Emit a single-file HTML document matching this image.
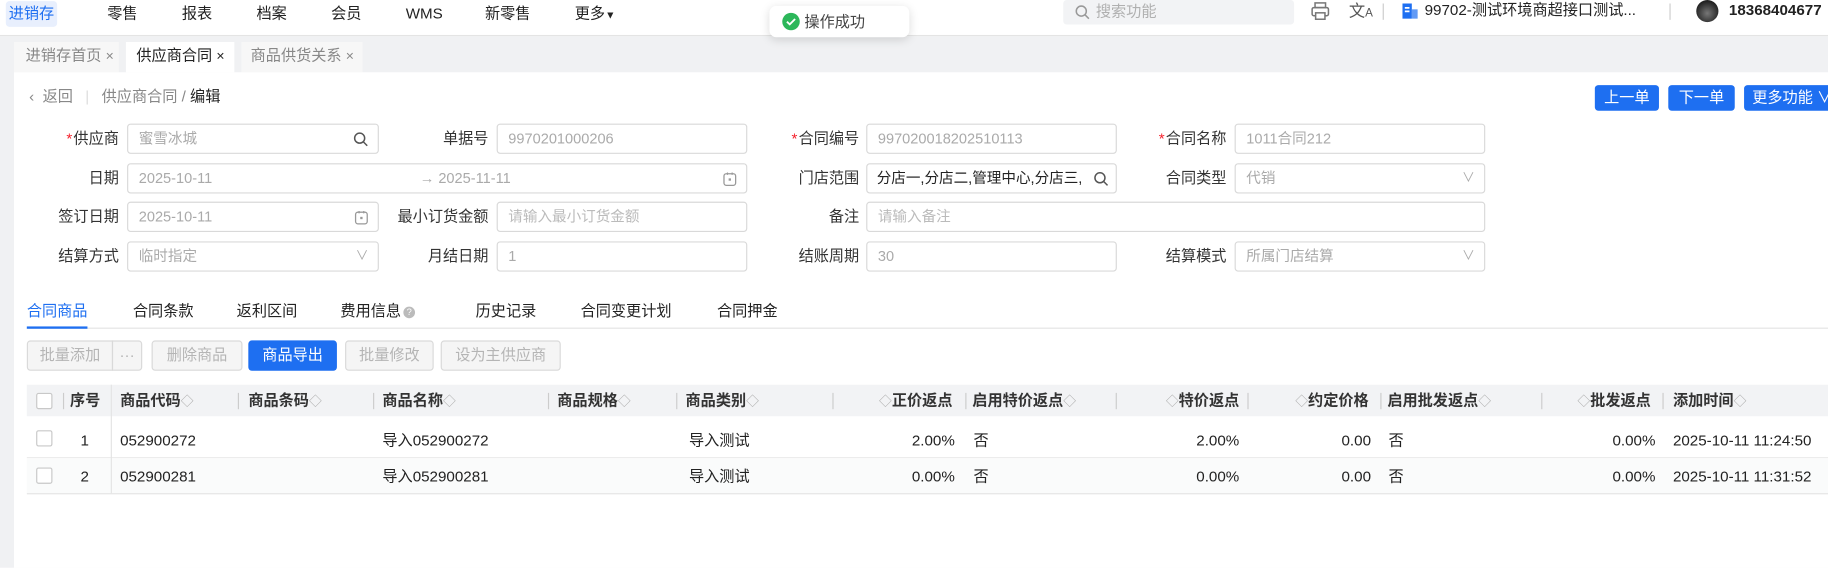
<!DOCTYPE html>
<html><head><meta charset="utf-8">
<style>
*{box-sizing:border-box;margin:0;padding:0}
html,body{width:1828px;height:567px;overflow:hidden;background:#fff}
#w{position:absolute;left:0;top:0;width:1568px;height:487px;transform:scale(1.16582);transform-origin:0 0;font-family:"Liberation Sans","Noto Sans CJK SC",sans-serif;font-size:13px;color:#222;background:#f0f1f3}
.a{position:absolute;white-space:nowrap}
.inp{position:absolute;height:26px;border:1px solid #d9d9d9;border-radius:3px;background:#fff;color:#aaa;font-size:12.5px;line-height:24px;padding-left:9px;overflow:hidden;white-space:nowrap}
.lbl{position:absolute;width:100px;text-align:right;font-size:13px;line-height:26px;color:#333}
.req::before{content:"*";color:#f5222d;margin-right:1px}
.ico{position:absolute;right:8px;top:6px}
.btn{position:absolute;height:26px;border:1px solid #d9d9d9;border-radius:3px;background:#f5f5f5;color:#b5b5b5;font-size:13px;line-height:24px;text-align:center}
.bb{position:absolute;height:22px;border-radius:3px;background:#1e6ff1;color:#fff;font-size:13px;line-height:22px;text-align:center}
.th{position:absolute;top:330px;height:27px;line-height:27px;font-weight:bold;font-size:13px;color:#333}
.td{position:absolute;font-size:13px;color:#222;line-height:20px}
.sep{position:absolute;width:1px;height:14px;background:#ccc;top:337px}
.sort{color:#aaa;font-weight:normal;font-size:11px}
.cb{position:absolute;width:14px;height:14px;border:1px solid #c8c8c8;border-radius:2px;background:#fff}
</style></head><body><div id="w">
<!-- top nav -->
<div class="a" style="left:0;top:0;width:1568px;height:31px;background:#fff;border-bottom:1px solid #e4e4e4"></div>
<div class="a" style="left:5px;top:1px;width:44px;height:22px;background:#e8effd;border-radius:3px;color:#1e6ff1;line-height:22px;text-align:center">进销存</div>
<div class="a" style="left:92px;top:1px;line-height:22px">零售</div>
<div class="a" style="left:156px;top:1px;line-height:22px">报表</div>
<div class="a" style="left:220px;top:1px;line-height:22px">档案</div>
<div class="a" style="left:284px;top:1px;line-height:22px">会员</div>
<div class="a" style="left:348px;top:1px;line-height:22px">WMS</div>
<div class="a" style="left:416px;top:1px;line-height:22px">新零售</div>
<div class="a" style="left:493px;top:1px;line-height:22px">更多<span style="font-size:9px">▼</span></div>
<div class="a" style="left:912px;top:0;width:198px;height:21px;background:#f2f3f5;border-radius:3px;color:#b0b0b0;line-height:20px;padding-left:28px">搜索功能
<svg style="position:absolute;left:10px;top:4px" width="13" height="13" viewBox="0 0 13 13"><circle cx="5.5" cy="5.5" r="4.3" fill="none" stroke="#999" stroke-width="1.3"/><path d="M8.7 8.7L12 12" stroke="#999" stroke-width="1.3"/></svg></div>
<svg class="a" style="left:1124px;top:1px" width="17" height="17" viewBox="0 0 17 17"><rect x="4" y="1.5" width="9" height="4" fill="none" stroke="#777" stroke-width="1.3"/><rect x="1.5" y="5.5" width="14" height="7" rx="1.5" fill="none" stroke="#777" stroke-width="1.3"/><rect x="4.5" y="10" width="8" height="5.5" fill="#fff" stroke="#777" stroke-width="1.3"/></svg>
<div class="a" style="left:1157px;top:0;font-size:14px;color:#555;line-height:18px">文<span style="font-size:10px">A</span></div>
<div class="a" style="left:1186px;top:3px;width:1px;height:14px;background:#ccc"></div>
<svg class="a" style="left:1202px;top:2px" width="15" height="15" viewBox="0 0 15 15"><rect x="1" y="1" width="8" height="13" fill="#1e6ff1"/><rect x="9" y="6" width="5" height="8" fill="#1e6ff1" opacity=".7"/><rect x="3" y="4" width="4" height="1.5" fill="#fff"/><rect x="3" y="7" width="4" height="1.5" fill="#fff"/></svg>
<div class="a" style="left:1222px;top:0;line-height:18px;font-size:13px">99702-测试环境商超接口测试...</div>
<div class="a" style="left:1432px;top:3px;width:1px;height:14px;background:#ccc"></div>
<div class="a" style="left:1455px;top:0;width:19px;height:19px;border-radius:50%;background:radial-gradient(circle at 50% 60%,#777,#222 70%)"></div>
<div class="a" style="left:1483px;top:0;line-height:18px;font-size:13px;font-weight:bold;color:#222">18368404677</div>
<!-- toast -->
<div class="a" style="left:660px;top:5px;width:120px;height:27px;background:#fff;border-radius:6px;box-shadow:0 2px 8px rgba(0,0,0,.15);line-height:27px;padding-left:30px;color:#444">操作成功
<div style="position:absolute;left:11px;top:6px;width:15px;height:15px;border-radius:50%;background:#2cb75a"><svg width="15" height="15" viewBox="0 0 15 15" style="position:absolute;left:0;top:0"><path d="M4 7.6l2.4 2.3L11 5.3" fill="none" stroke="#fff" stroke-width="1.6"/></svg></div></div>
<!-- tabs -->
<div class="a" style="left:12px;top:36px;width:90px;height:26px;background:#f7f7f7;color:#888;line-height:24px;padding-left:10px">进销存首页 <span style="font-size:12px">×</span></div>
<div class="a" style="left:108px;top:36px;width:93px;height:26px;background:#fff;color:#222;line-height:24px;padding-left:9px">供应商合同 <span style="font-size:12px">×</span></div>
<div class="a" style="left:207px;top:36px;width:104px;height:26px;background:#f7f7f7;color:#888;line-height:24px;padding-left:8px">商品供货关系 <span style="font-size:12px">×</span></div>
<!-- content -->
<div class="a" style="left:12px;top:62px;width:1556px;height:425px;background:#fff"></div>
<div class="a" style="left:25px;top:74px;line-height:18px;color:#888">‹&nbsp; 返回 <span style="color:#ddd;margin:0 7px">|</span> 供应商合同 / <span style="color:#222">编辑</span></div>
<div class="bb" style="left:1368px;top:73px;width:55px">上一单</div>
<div class="bb" style="left:1431px;top:73px;width:57px">下一单</div>
<div class="bb" style="left:1496px;top:73px;width:80px;text-align:left;padding-left:7px">更多功能 ∨</div>
<!-- form -->
<div class="lbl req" style="left:2px;top:106px">供应商</div>
<div class="inp" style="left:109px;top:106px;width:216px">蜜雪冰城<svg class="ico" width="13" height="13" viewBox="0 0 13 13"><circle cx="5.5" cy="5.5" r="4.3" fill="none" stroke="#555" stroke-width="1.3"/><path d="M8.7 8.7L12 12" stroke="#555" stroke-width="1.3"/></svg></div>
<div class="lbl" style="left:319px;top:106px">单据号</div>
<div class="inp" style="left:426px;top:106px;width:215px">9970201000206</div>
<div class="lbl req" style="left:637px;top:106px">合同编号</div>
<div class="inp" style="left:743px;top:106px;width:215px">997020018202510113</div>
<div class="lbl req" style="left:952px;top:106px">合同名称</div>
<div class="inp" style="left:1059px;top:106px;width:215px">1011合同212</div>

<div class="lbl" style="left:2px;top:140px">日期</div>
<div class="inp" style="left:109px;top:140px;width:532px">2025-10-11<span style="position:absolute;left:250px;color:#aaa">→ 2025-11-11</span><svg class="ico" width="12" height="13" viewBox="0 0 12 13"><rect x="1" y="2" width="10" height="10" rx="2" fill="none" stroke="#999" stroke-width="1.1"/><path d="M4 1v2M8 1v2" stroke="#999"/><rect x="5" y="6" width="2" height="2" fill="#999"/></svg></div>
<div class="lbl" style="left:637px;top:140px">门店范围</div>
<div class="inp" style="left:743px;top:140px;width:215px;color:#222;padding-left:8px">分店一,分店二,管理中心,分店三,<svg class="ico" style="right:6px" width="13" height="13" viewBox="0 0 13 13"><circle cx="5.5" cy="5.5" r="4.3" fill="none" stroke="#555" stroke-width="1.3"/><path d="M8.7 8.7L12 12" stroke="#555" stroke-width="1.3"/></svg></div>
<div class="lbl" style="left:952px;top:140px">合同类型</div>
<div class="inp" style="left:1059px;top:140px;width:215px">代销<span class="ico" style="top:0;color:#aaa;font-size:11px">∨</span></div>

<div class="lbl" style="left:2px;top:173px">签订日期</div>
<div class="inp" style="left:109px;top:173px;width:216px">2025-10-11<svg class="ico" width="12" height="13" viewBox="0 0 12 13"><rect x="1" y="2" width="10" height="10" rx="2" fill="none" stroke="#999" stroke-width="1.1"/><path d="M4 1v2M8 1v2" stroke="#999"/><rect x="5" y="6" width="2" height="2" fill="#999"/></svg></div>
<div class="lbl" style="left:319px;top:173px">最小订货金额</div>
<div class="inp" style="left:426px;top:173px;width:215px;color:#bbb">请输入最小订货金额</div>
<div class="lbl" style="left:637px;top:173px">备注</div>
<div class="inp" style="left:743px;top:173px;width:531px;color:#bbb">请输入备注</div>

<div class="lbl" style="left:2px;top:207px">结算方式</div>
<div class="inp" style="left:109px;top:207px;width:216px">临时指定<span class="ico" style="top:0;color:#aaa;font-size:11px">∨</span></div>
<div class="lbl" style="left:319px;top:207px">月结日期</div>
<div class="inp" style="left:426px;top:207px;width:215px">1</div>
<div class="lbl" style="left:637px;top:207px">结账周期</div>
<div class="inp" style="left:743px;top:207px;width:215px">30</div>
<div class="lbl" style="left:952px;top:207px">结算模式</div>
<div class="inp" style="left:1059px;top:207px;width:215px">所属门店结算<span class="ico" style="top:0;color:#aaa;font-size:11px">∨</span></div>
<!-- sub tabs -->
<div class="a" style="left:23px;top:281px;width:1545px;height:1px;background:#e4e4e4"></div>
<div class="a" style="left:23px;top:280px;width:52px;height:2px;background:#1e6ff1"></div>
<div class="a" style="left:23px;top:258px;line-height:18px;color:#1e6ff1">合同商品</div>
<div class="a" style="left:114px;top:258px;line-height:18px">合同条款</div>
<div class="a" style="left:203px;top:258px;line-height:18px">返利区间</div>
<div class="a" style="left:292px;top:258px;line-height:18px">费用信息<span style="display:inline-block;width:10px;height:10px;border-radius:50%;background:#bbb;color:#fff;font-size:8px;line-height:10px;text-align:center;vertical-align:middle;margin-left:2px">?</span></div>
<div class="a" style="left:408px;top:258px;line-height:18px">历史记录</div>
<div class="a" style="left:498px;top:258px;line-height:18px">合同变更计划</div>
<div class="a" style="left:615px;top:258px;line-height:18px">合同押金</div>
<!-- buttons -->
<div class="btn" style="left:23px;top:292px;width:74px;border-radius:3px 0 0 3px">批量添加</div>
<div class="btn" style="left:96px;top:292px;width:26px;border-radius:0 3px 3px 0">···</div>
<div class="btn" style="left:130px;top:292px;width:78px">删除商品</div>
<div class="bb" style="left:213px;top:292px;width:76px;height:26px;line-height:26px">商品导出</div>
<div class="btn" style="left:296px;top:292px;width:76px">批量修改</div>
<div class="btn" style="left:378px;top:292px;width:103px">设为主供应商</div>
<!-- table -->
<div class="a" style="left:23px;top:330px;width:1545px;height:27px;background:#f2f3f5"></div>
<div class="a" style="left:23px;top:392px;width:1545px;height:1px;background:#ececec"></div>
<div class="a" style="left:23px;top:393px;width:1545px;height:30px;background:#fafbfb"></div>
<div class="a" style="left:23px;top:423px;width:1545px;height:1px;background:#e4e4e4"></div>
<div class="a" style="left:95px;top:330px;width:1px;height:93px;background:#e4e4e4"></div>
<div class="cb" style="left:31px;top:337px"></div>
<div class="sep" style="left:54px"></div>
<div class="th" style="left:60px">序号</div>
<div class="th" style="left:103px">商品代码<span class="sort">◇</span></div>
<div class="sep" style="left:204px"></div><div class="th" style="left:213px">商品条码<span class="sort">◇</span></div>
<div class="sep" style="left:320px"></div><div class="th" style="left:328px">商品名称<span class="sort">◇</span></div>
<div class="sep" style="left:470px"></div><div class="th" style="left:478px">商品规格<span class="sort">◇</span></div>
<div class="sep" style="left:580px"></div><div class="th" style="left:588px">商品类别<span class="sort">◇</span></div>
<div class="sep" style="left:714px"></div><div class="th" style="left:754px"><span class="sort">◇</span>正价返点</div>
<div class="sep" style="left:828px"></div><div class="th" style="left:834px">启用特价返点<span class="sort">◇</span></div>
<div class="sep" style="left:957px"></div><div class="th" style="left:1000px"><span class="sort">◇</span>特价返点</div>
<div class="sep" style="left:1070px"></div><div class="th" style="left:1111px"><span class="sort">◇</span>约定价格</div>
<div class="sep" style="left:1184px"></div><div class="th" style="left:1190px">启用批发返点<span class="sort">◇</span></div>
<div class="sep" style="left:1322px"></div><div class="th" style="left:1353px"><span class="sort">◇</span>批发返点</div>
<div class="sep" style="left:1426px"></div><div class="th" style="left:1435px">添加时间<span class="sort">◇</span></div>
<!-- rows -->
<div class="cb" style="left:31px;top:369px"></div>
<div class="td" style="left:69px;top:368px">1</div>
<div class="td" style="left:103px;top:368px">052900272</div>
<div class="td" style="left:328px;top:368px">导入052900272</div>
<div class="td" style="left:591px;top:368px">导入测试</div>
<div class="td" style="left:720px;top:368px;width:99px;text-align:right">2.00%</div>
<div class="td" style="left:835px;top:368px">否</div>
<div class="td" style="left:960px;top:368px;width:103px;text-align:right">2.00%</div>
<div class="td" style="left:1070px;top:368px;width:106px;text-align:right">0.00</div>
<div class="td" style="left:1191px;top:368px">否</div>
<div class="td" style="left:1330px;top:368px;width:90px;text-align:right">0.00%</div>
<div class="td" style="left:1435px;top:368px">2025-10-11 11:24:50</div>
<div class="cb" style="left:31px;top:401px"></div>
<div class="td" style="left:69px;top:399px">2</div>
<div class="td" style="left:103px;top:399px">052900281</div>
<div class="td" style="left:328px;top:399px">导入052900281</div>
<div class="td" style="left:591px;top:399px">导入测试</div>
<div class="td" style="left:720px;top:399px;width:99px;text-align:right">0.00%</div>
<div class="td" style="left:835px;top:399px">否</div>
<div class="td" style="left:960px;top:399px;width:103px;text-align:right">0.00%</div>
<div class="td" style="left:1070px;top:399px;width:106px;text-align:right">0.00</div>
<div class="td" style="left:1191px;top:399px">否</div>
<div class="td" style="left:1330px;top:399px;width:90px;text-align:right">0.00%</div>
<div class="td" style="left:1435px;top:399px">2025-10-11 11:31:52</div>
</div></body></html>
